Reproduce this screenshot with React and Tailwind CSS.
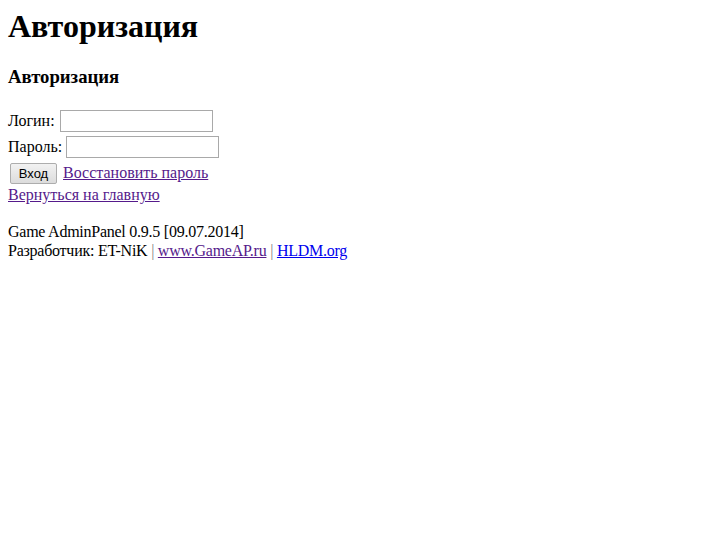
export default function App() {
  return (
    <div className="min-h-screen bg-white p-2 text-base text-black" style={{ fontFamily: '"Liberation Serif", "Times New Roman", serif' }}>
      <h1 className="mb-[21px] text-[32px] font-bold leading-[37px]">Авторизация</h1>
      <h3 className="mb-[21px] text-[18.72px] font-bold leading-[21px]">Авторизация</h3>

      <form onSubmit={(e) => e.preventDefault()}>
        <div className="flex h-[26px] items-center">
          <span>Логин:</span>
          <input type="text" className="ml-[5px] h-[22px] w-[153px] border border-[#a9a9a9] bg-white px-0.5" />
        </div>
        <div className="flex h-[26px] items-center">
          <span>Пароль:</span>
          <input type="password" className="ml-1 h-[22px] w-[153px] border border-[#a9a9a9] bg-white px-0.5" />
        </div>
        <div className="flex h-[26px] items-center">
          <button
            type="submit"
            className="ml-0.5 h-[21px] w-[47px] rounded-[2px] border border-[#adadad] bg-gradient-to-b from-[#f2f2f2] to-[#dcdcdc] text-[13px] leading-none text-black"
            style={{ fontFamily: '"Liberation Sans", Arial, sans-serif' }}
          >
            Вход
          </button>
          <a href="#" className="ml-1.5 text-[#551a8b] underline">Восстановить пароль</a>
        </div>
        <div className="leading-[18px]">
          <a href="#" className="text-[#551a8b] underline">Вернуться на главную</a>
        </div>
      </form>

      <div className="mt-[18px] leading-[19px] tracking-[-0.25px]">
        <div>Game AdminPanel 0.9.5 [09.07.2014]</div>
        <div>
          Разработчик: ET-NiK <span className="text-[#7f7f7f]">|</span>{' '}
          <a href="#" className="text-[#551a8b] underline">www.GameAP.ru</a>{' '}
          <span className="text-[#7f7f7f]">|</span>{' '}
          <a href="#" className="text-[#0000ee] underline">HLDM.org</a>
        </div>
      </div>
    </div>
  );
}
